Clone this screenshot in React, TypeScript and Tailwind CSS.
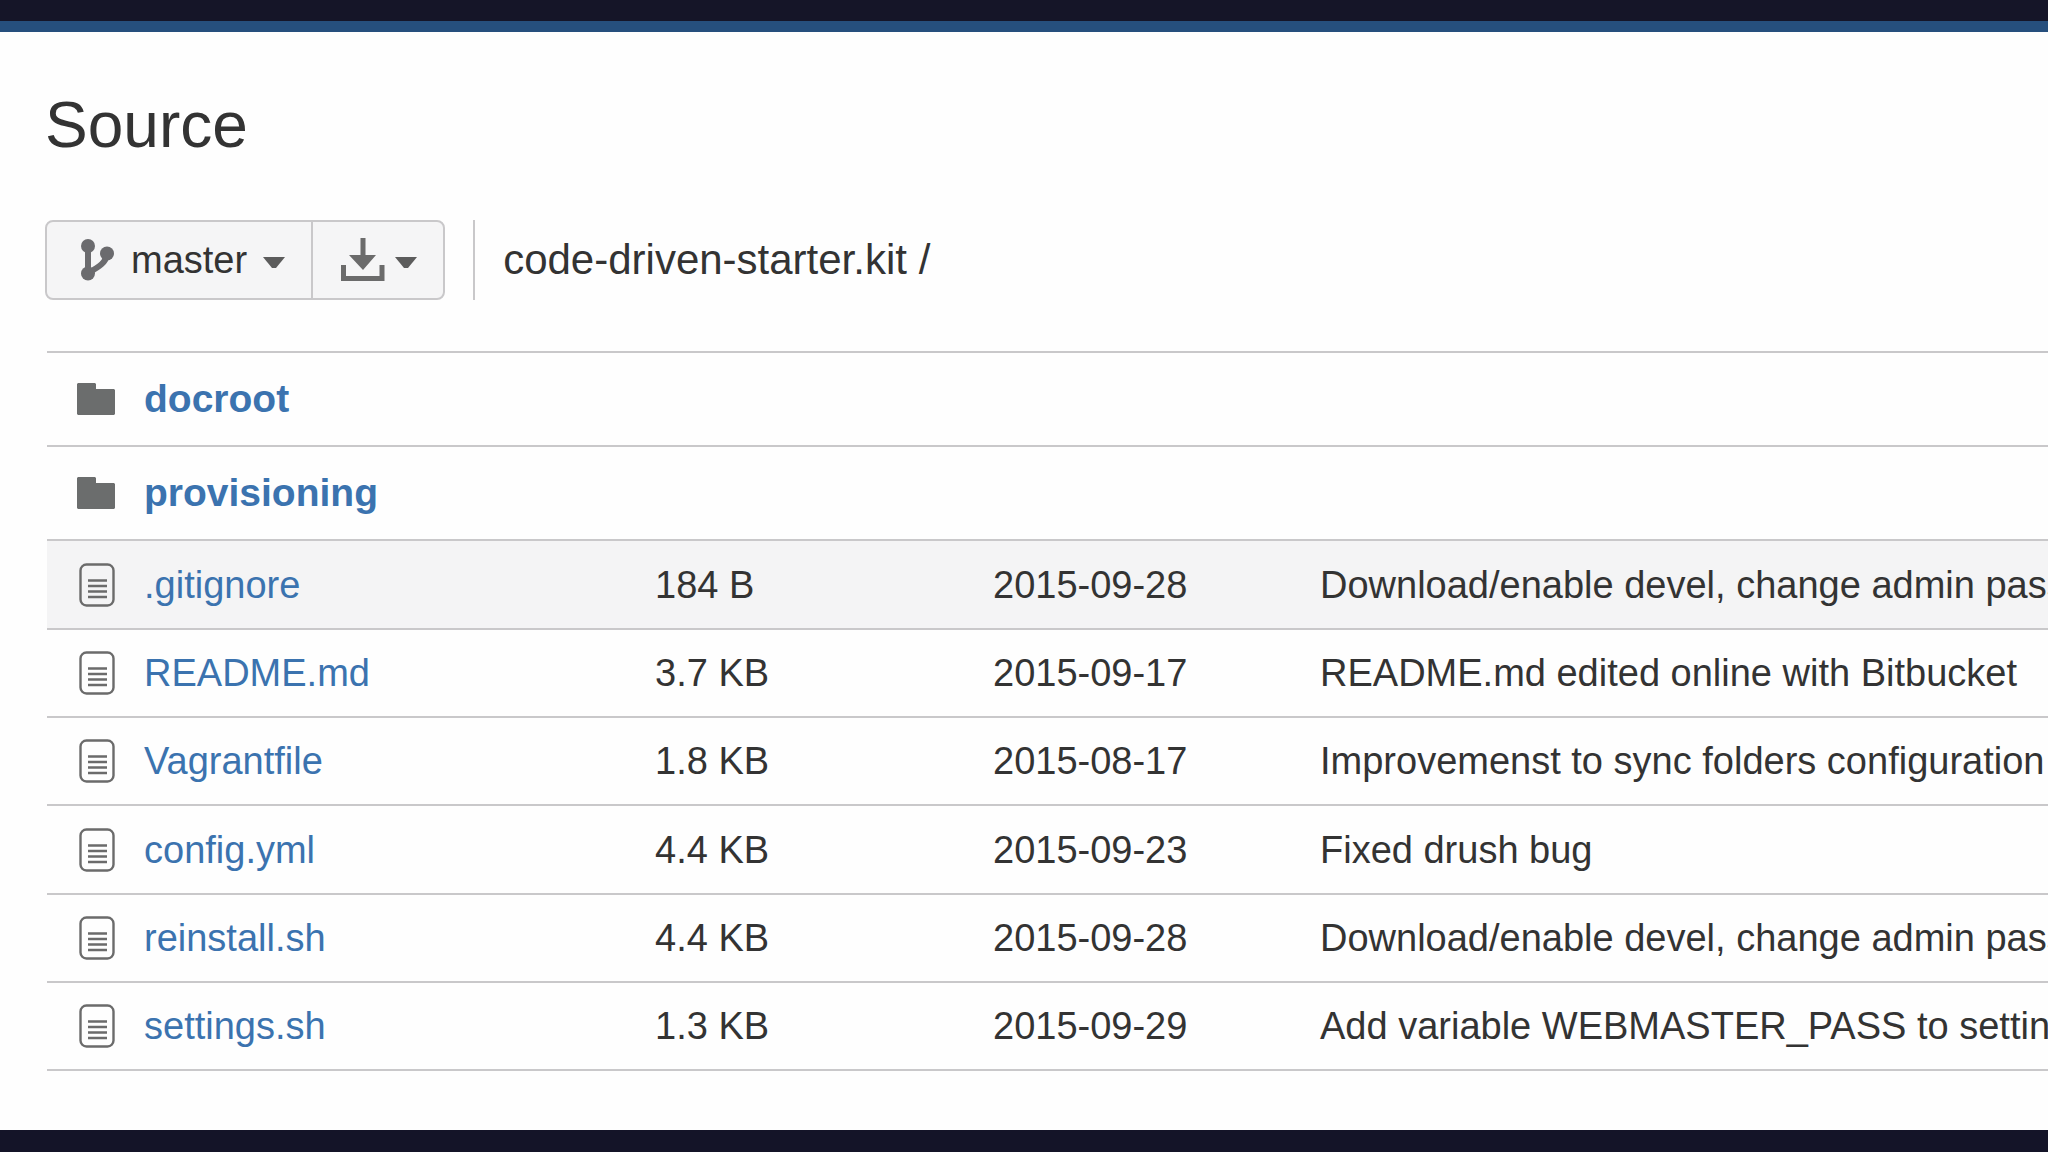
import type { ReactNode } from "react";

type Entry = {
  name: string;
  folder?: boolean;
  size?: string;
  date?: string;
  message?: string;
};

const entries: Entry[] = [
  { name: "docroot", folder: true },
  { name: "provisioning", folder: true },
  {
    name: ".gitignore",
    size: "184 B",
    date: "2015-09-28",
    message: "Download/enable devel, change admin pass",
  },
  {
    name: "README.md",
    size: "3.7 KB",
    date: "2015-09-17",
    message: "README.md edited online with Bitbucket",
  },
  {
    name: "Vagrantfile",
    size: "1.8 KB",
    date: "2015-08-17",
    message: "Improvemenst to sync folders configuration",
  },
  {
    name: "config.yml",
    size: "4.4 KB",
    date: "2015-09-23",
    message: "Fixed drush bug",
  },
  {
    name: "reinstall.sh",
    size: "4.4 KB",
    date: "2015-09-28",
    message: "Download/enable devel, change admin pass",
  },
  {
    name: "settings.sh",
    size: "1.3 KB",
    date: "2015-09-29",
    message: "Add variable WEBMASTER_PASS to setting",
  },
];

const BranchIcon = () => (
  <svg width="36" height="42" viewBox="0 0 36 42" aria-hidden="true">
    <g fill="#6b6b6e">
      <circle cx="9" cy="7" r="7" />
      <circle cx="9" cy="34.5" r="7" />
      <circle cx="28" cy="14.5" r="7" />
    </g>
    <path
      d="M9 7v27M28 14c0 9-8 14-19 20"
      fill="none"
      stroke="#6b6b6e"
      strokeWidth="6"
    />
  </svg>
);

const DownloadIcon = () => (
  <svg width="44" height="44" viewBox="0 0 44 44" aria-hidden="true">
    <path d="M19.5 0h5v17H35L22 32 8 17h11.5z" fill="#6b6b6b" />
    <path
      d="M2.5 27v13.5h38.5V27"
      fill="none"
      stroke="#6b6b6b"
      strokeWidth="5"
    />
  </svg>
);

const Caret = () => (
  <svg width="22" height="16" viewBox="0 0 22 16" aria-hidden="true">
    <path d="M0 5h22L13 16H9z" fill="#5c5c5c" />
  </svg>
);

const FolderIcon = () => (
  <svg width="38" height="32" viewBox="0 0 38 32" aria-hidden="true">
    <path d="M1 0h17l1 1v5h18l1 1v24l-1 1H1l-1-1V1z" fill="#6b6d6d" />
  </svg>
);

const FileIcon = () => (
  <svg width="38" height="44" viewBox="0 0 38 44" aria-hidden="true">
    <rect
      x="3.5"
      y="1.5"
      width="33"
      height="41"
      rx="6"
      fill="none"
      stroke="#6b6b6b"
      strokeWidth="2.4"
    />
    <path
      d="M11 17.5h19M11 23h19M11 28.5h19M11 34h19"
      stroke="#6b6b6b"
      strokeWidth="2.4"
    />
  </svg>
);

const ToolbarButton = ({
  label,
  className,
  children,
}: {
  label: string;
  className: string;
  children: ReactNode;
}) => (
  <button
    type="button"
    aria-label={label}
    className={`flex h-20 items-center border-2 border-[#c9c8ca] bg-[#f5f5f6] pr-[26px] ${className}`}
  >
    {children}
  </button>
);

const App = () => {
  return (
    <div className="flex min-h-screen flex-col overflow-hidden bg-[#fefefe] font-['Liberation_Sans',Arial,sans-serif] text-[38px] leading-[44px] text-[#333]">
      <header className="h-8 border-t-[21px] border-[#151528] bg-[#264f7d]" />

      <main className="flex-1 pt-14 pb-8 pl-[45px]">
        <h1 className="text-[64px] leading-[74px]">Source</h1>

        <div className="mt-[58px] flex items-center">
          <ToolbarButton label="master" className="rounded-l-lg pl-8">
            <BranchIcon />
            <span className="ml-4">master</span>
            <span className="ml-4">
              <Caret />
            </span>
          </ToolbarButton>
          <ToolbarButton
            label="Download"
            className="-ml-0.5 gap-[10px] rounded-r-lg pl-7"
          >
            <DownloadIcon />
            <Caret />
          </ToolbarButton>
          <div className="ml-7 flex h-20 items-center border-l-2 border-[#c9c8ca] pl-7 text-[42px]">
            code-driven-starter.kit /
          </div>
        </div>

        <div className="mt-[51px] pl-0.5">
          <table className="w-full table-fixed border-collapse whitespace-nowrap">
            <colgroup>
              <col className="w-[97px]" />
              <col className="w-[511px]" />
              <col className="w-[338px]" />
              <col className="w-[327px]" />
              <col />
            </colgroup>
            <tbody>
              {entries.map((entry) => (
                <tr
                  key={entry.name}
                  className={`border-y-2 border-[#c9c8ca] ${
                    entry.folder ? "h-[94px]" : "h-[88px] nth-[3n]:h-[89px]"
                  } ${entry.name === ".gitignore" ? "bg-[#f4f4f5]" : ""}`}
                >
                  <td className="pl-[30px]">
                    {entry.folder ? <FolderIcon /> : <FileIcon />}
                  </td>
                  <td>
                    <a
                      href={`#${entry.name}`}
                      className={`text-[#3b73af] ${
                        entry.folder ? "text-[39px] font-bold" : ""
                      }`}
                    >
                      {entry.name}
                    </a>
                  </td>
                  <td>{entry.size}</td>
                  <td>{entry.date}</td>
                  <td>{entry.message}</td>
                </tr>
              ))}
            </tbody>
          </table>
        </div>
      </main>

      <footer className="h-[22px] bg-[#141428]" />
    </div>
  );
};

export default App;
